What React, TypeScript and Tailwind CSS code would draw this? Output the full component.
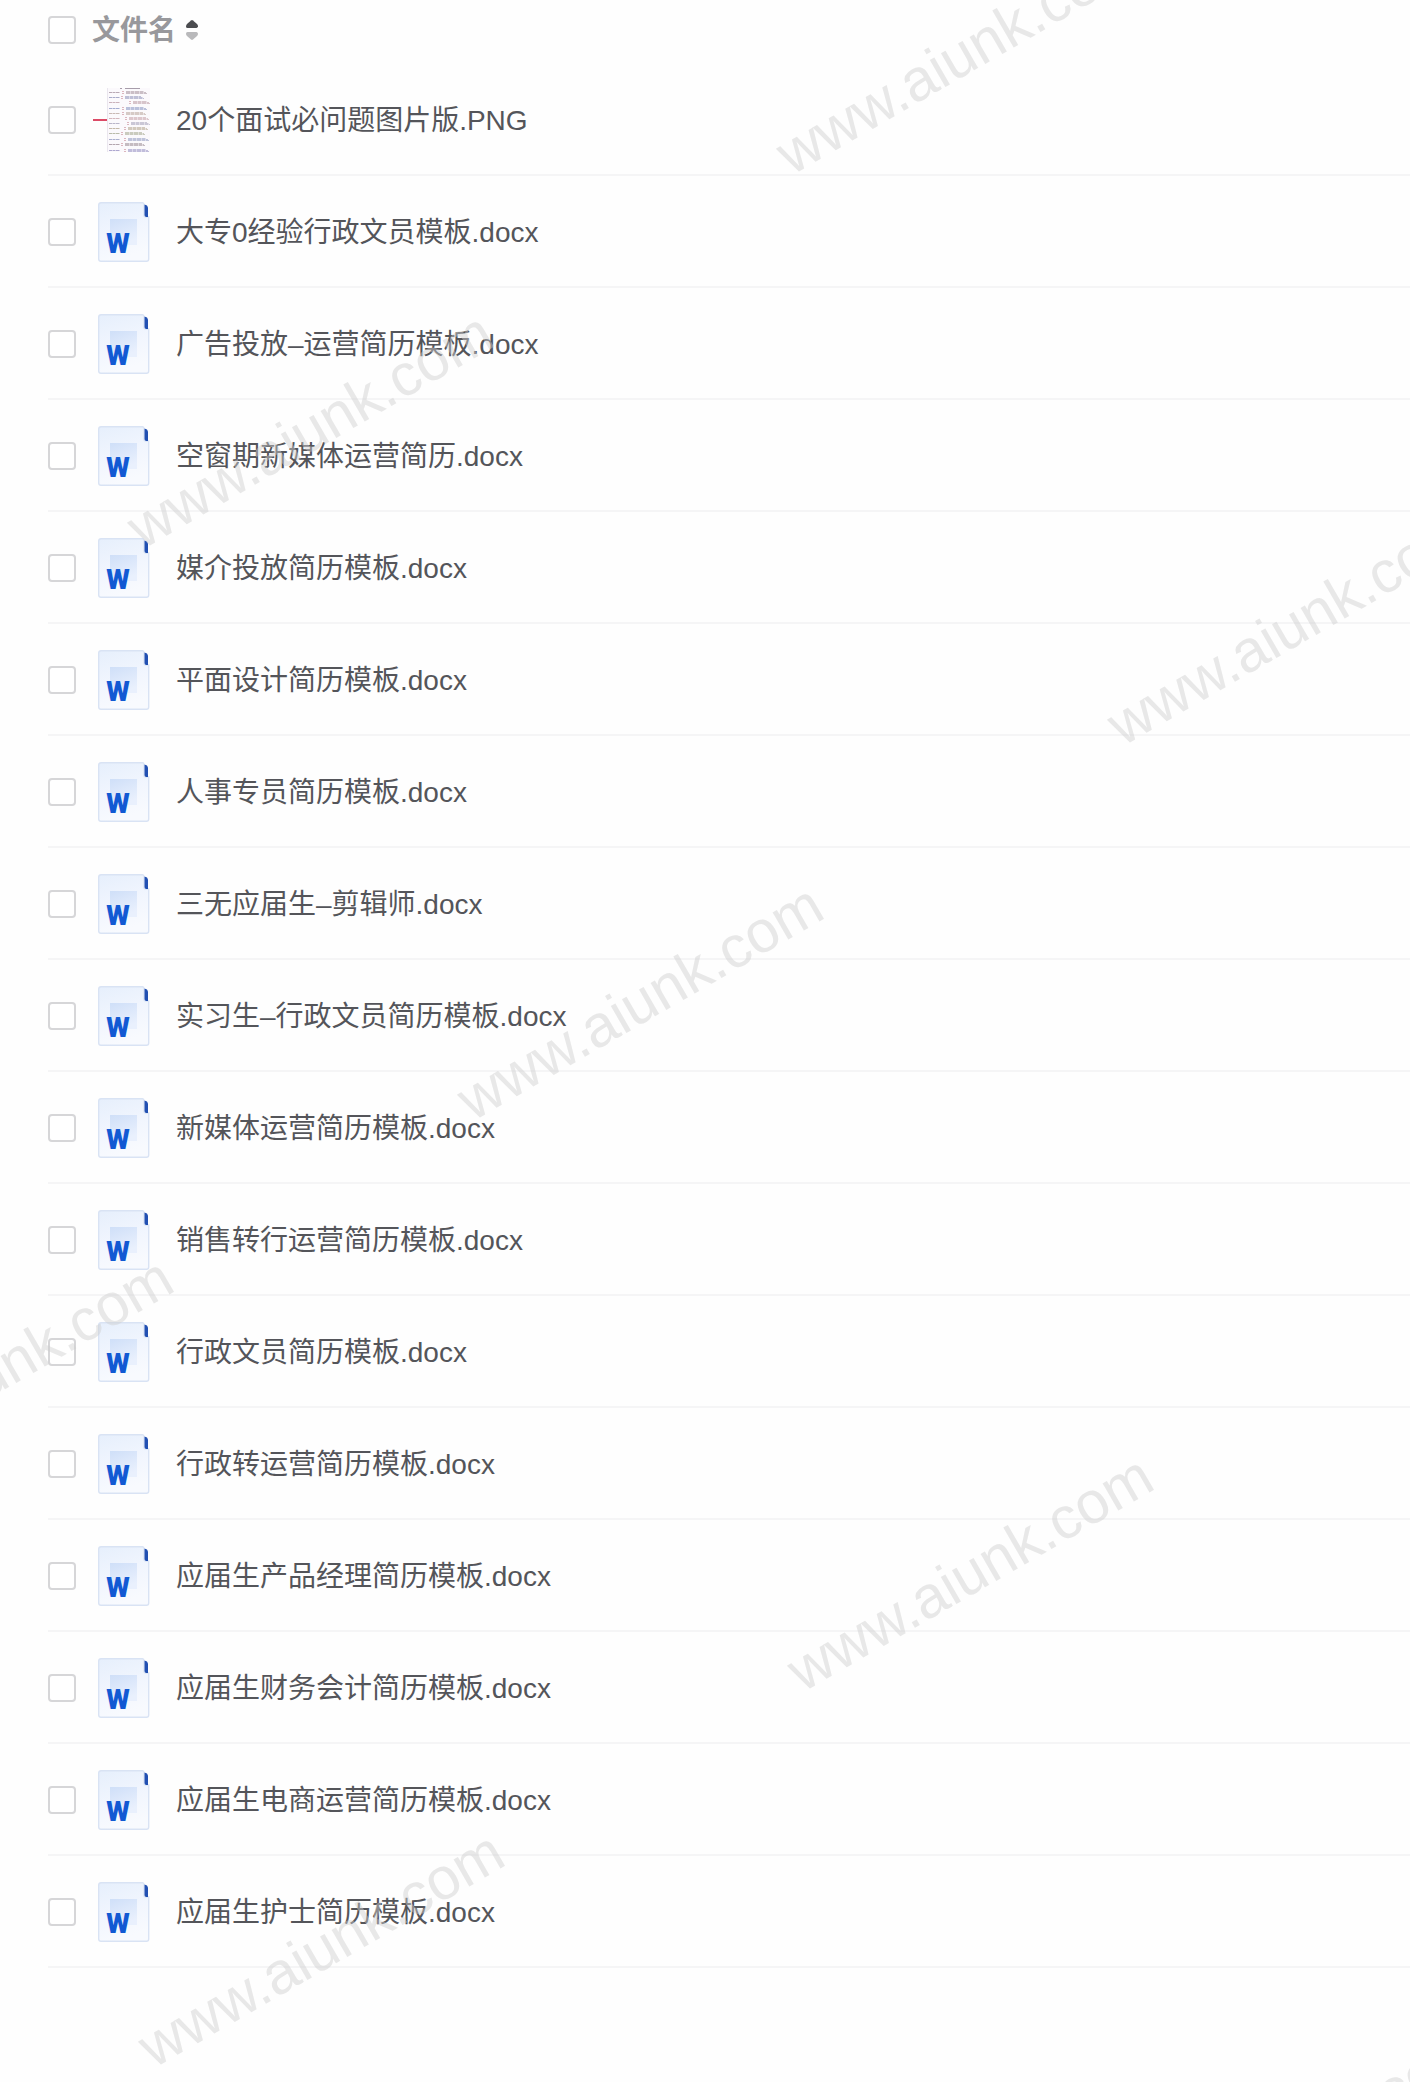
import { useState } from "react";

const files = [
  "20个面试必问题图片版.PNG",
  "大专0经验行政文员模板.docx",
  "广告投放–运营简历模板.docx",
  "空窗期新媒体运营简历.docx",
  "媒介投放简历模板.docx",
  "平面设计简历模板.docx",
  "人事专员简历模板.docx",
  "三无应届生–剪辑师.docx",
  "实习生–行政文员简历模板.docx",
  "新媒体运营简历模板.docx",
  "销售转行运营简历模板.docx",
  "行政文员简历模板.docx",
  "行政转运营简历模板.docx",
  "应届生产品经理简历模板.docx",
  "应届生财务会计简历模板.docx",
  "应届生电商运营简历模板.docx",
  "应届生护士简历模板.docx",
];

const watermarks = [
  "left-[754px] top-[26px]",
  "left-[105px] top-[400px]",
  "left-[1085px] top-[597px]",
  "left-[435px] top-[972px]",
  "left-[-215px] top-[1345px]",
  "left-[765px] top-[1543px]",
  "left-[116px] top-[1919px]",
  "left-[1095px] top-[2114px]",
];

export default function App() {
  const [selected, setSelected] = useState<string[]>([]);
  const [descending, setDescending] = useState(false);

  const rows = descending ? [...files].reverse() : files;

  const toggle = (name: string) =>
    setSelected((prev) => (prev.includes(name) ? prev.filter((n) => n !== name) : [...prev, name]));

  return (
    <main className="relative min-h-screen overflow-hidden bg-[#fefefe] pl-12 text-[28px] leading-10 text-[#54555a] font-['Liberation_Sans','Noto_Sans_CJK_SC',sans-serif]">
      <table className="w-full border-separate border-spacing-0">
        <thead>
          <tr>
            <th className="w-11 h-16 p-0 pb-1">
              <CheckBox
                id="select-all"
                label="全选"
                checked={selected.length === files.length}
                onChange={() => setSelected(selected.length === files.length ? [] : files)}
              />
            </th>
            <th className="h-16 p-0 pb-1 text-left text-[#98989c]">
              <button className="flex items-center gap-2.5 font-bold" onClick={() => setDescending(!descending)}>
                <span className="pt-0.5">文件名</span>
                <SortIcon />
              </button>
            </th>
          </tr>
        </thead>
        <tbody>
          {rows.map((name, i) => (
            <tr key={name}>
              <td className="w-11 h-28 p-0 pt-0.5 border-b-2 border-[#f5f5f6]">
                <CheckBox
                  id={`file-${i}`}
                  checked={selected.includes(name)}
                  onChange={() => toggle(name)}
                />
              </td>
              <td className="h-28 p-0 pt-0.5 border-b-2 border-[#f5f5f6]">
                <label htmlFor={`file-${i}`} className="flex items-center gap-5">
                  <span className="flex size-16 shrink-0 items-center justify-center">
                    {name.endsWith(".PNG") ? <ImageThumb /> : <DocIcon />}
                  </span>
                  <span className="pt-0.5">{name}</span>
                </label>
              </td>
            </tr>
          ))}
        </tbody>
      </table>

      {/* Watermark layer */}
      <div className="absolute inset-0 overflow-hidden pointer-events-none select-none" aria-hidden="true">
        {watermarks.map((pos) => (
          <span
            key={pos}
            className={`absolute ${pos} -rotate-30 whitespace-nowrap text-[59px] leading-[60px] text-[#cecece]/45`}
          >
            www.aiunk.com
          </span>
        ))}
      </div>
    </main>
  );
}

function CheckBox({ id, label, checked, onChange }: { id: string; label?: string; checked: boolean; onChange: () => void }) {
  return (
    <input
      id={id}
      type="checkbox"
      aria-label={label}
      checked={checked}
      onChange={onChange}
      className="block size-7 appearance-none rounded border-2 border-[#d6d6d8] bg-white checked:border-blue-600 checked:bg-blue-600"
    />
  );
}

function SortIcon() {
  return (
    <svg width="12" height="20" viewBox="0 0 12 20">
      <path d="M5 .4Q6-.4 7 .4L11 4Q12 5 12 6.200T10.500 8H1.500Q0 8 0 6.500T1 4Z" fill="#4b4c50" />
      <path d="M5 19.600Q6 20.400 7 19.600L11 16Q12 15 12 13.800T10.500 12H1.500Q0 12 0 13.500T1 16Z" fill="#b9b9bb" />
    </svg>
  );
}

function DocIcon() {
  return (
    <svg width="52" height="60" viewBox="0 0 52 60">
      <defs>
        <linearGradient id="sheet" x1="0" y1="0" x2="0.3" y2="1">
          <stop offset="0" stopColor="#e6effc" />
          <stop offset="0.6" stopColor="#f2f6fe" />
          <stop offset="1" stopColor="#f8fafe" />
        </linearGradient>
        <linearGradient id="panel" x1="0" y1="0" x2="0.4" y2="1">
          <stop offset="0" stopColor="#cfdff8" />
          <stop offset="1" stopColor="#e9f0fd" />
        </linearGradient>
      </defs>
      <path
        d="M3 .7H44.500Q46 .7 46 2.500V13Q46 15 48 15H50.700V57Q50.700 59.300 48.500 59.300H3Q.7 59.300 .7 57V3Q.7 .7 3 .7Z"
        fill="url(#sheet)"
        stroke="#d9e3f4"
        strokeWidth="1.4"
      />
      <path d="M46.500 2.500L49 3.500L50 5.500V15H48Q46.500 14.500 46.500 13Z" fill="#2250b2" />
      <rect x="12" y="17" width="27" height="26" fill="url(#panel)" />
      <text x="20" y="51" textAnchor="middle" className="font-['Roboto',sans-serif] text-[27px] font-black" fill="#1259d3">
        W
      </text>
    </svg>
  );
}

// Each line: y, start and end of the block on the right, its colour
const mapLines: [number, number, number, string][] = [
  [4, 34, 55, "#b9a9b4"],
  [9, 33, 52, "#a9abc9"],
  [14, 41, 58, "#cbb2bb"],
  [20, 34, 55, "#a4acd0"],
  [25, 34, 54, "#c9b9b4"],
  [30, 37, 57, "#d3b6bd"],
  [35, 39, 58, "#b9b5c9"],
  [40, 36, 56, "#c4b8a8"],
  [45, 33, 53, "#b9bba9"],
  [51, 36, 57, "#abb0cf"],
  [56, 33, 53, "#b3a5ae"],
  [62, 36, 57, "#aea8d0"],
];

function ImageThumb() {
  return (
    <svg width="64" height="64" viewBox="0 0 64 64">
      <rect x="15" y="0" width="43" height="64" fill="#fbf9fc" />
      <rect x="1" y="31" width="14" height="2" fill="#dc4b67" />
      <path d="M28 .5H30M33 .5H48" stroke="#a79daa" />
      <path d="M15.500 0V64" stroke="#eae6ee" />
      {mapLines.map(([y, from, to, color]) => (
        <g key={y} stroke={color}>
          <path d={`M17 ${y}.5H28`} strokeDasharray="3 .5" />
          <path d={`M${from - 4} ${y - 1}.5h2m-2 2h2`} stroke="#dcb6be" />
          <path d={`M${from} ${y - 1}.5H${to - 3}M${from} ${y}.5H${to - 1}M${from} ${y + 1}.5H${to}`} strokeDasharray="4 .5" strokeOpacity=".75" />
        </g>
      ))}
    </svg>
  );
}
